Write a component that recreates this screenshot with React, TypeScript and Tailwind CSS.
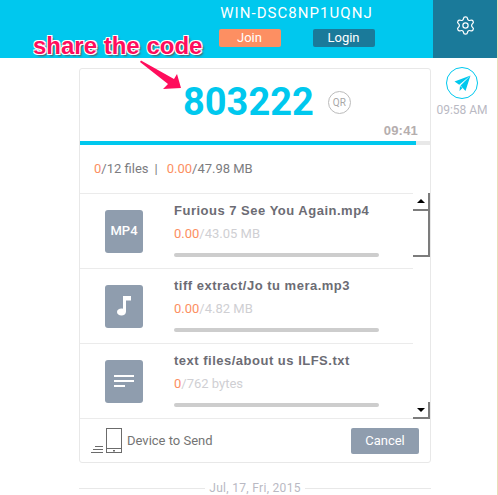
import { Settings } from 'lucide-react'

const files = [
  { name: 'Furious 7 See You Again.mp4', done: '0.00', total: '/43.05 MB', icon: 'mp4' },
  { name: 'tiff extract/Jo tu mera.mp3', done: '0.00', total: '/4.82 MB', icon: 'music' },
  { name: 'text files/about us ILFS.txt', done: '0', total: '/762 bytes', icon: 'text' },
]

function FileIcon({ kind }: { kind: string }) {
  return (
    <div className="flex h-[43px] w-[38px] items-center justify-center rounded-[3px] bg-[#8f9dae] text-[13px] font-medium text-white">
      {kind === 'mp4' && 'MP4'}
      {kind === 'music' && (
        <svg width="16" height="22" viewBox="0 0 16 22" fill="white">
          <path d="M7 1h8v4.500h-5V16.500c0 2.400-2 4-4.500 4S1 19 1 17s2-3.500 4.500-3.500c.6 0 1 .1 1.500.2z" />
        </svg>
      )}
      {kind === 'text' && (
        <svg width="20" height="13" viewBox="0 0 20 13" fill="white">
          <rect x="0" y="0" width="20" height="2" />
          <rect x="0" y="5" width="20" height="2" />
          <rect x="0" y="10" width="11" height="2" />
        </svg>
      )}
    </div>
  )
}

function FileRow({ f, last }: { f: (typeof files)[number]; last?: boolean }) {
  return (
    <div className={`flex border-t border-[#ebebeb] ${last ? 'h-[76px] border-b' : 'h-[75px]'}`}>
      <div className="flex w-[94px] shrink-0 items-center pl-[25px]">
        <FileIcon kind={f.icon} />
      </div>
      <div className="w-[205px] pt-[8px]">
        <div className="whitespace-nowrap font-['Liberation_Sans',sans-serif] text-[13px] leading-[18px] font-bold tracking-[0.5px] text-[#6c6c74]">
          {f.name}
        </div>
        <div className="mt-[5px] text-[13px] leading-[18px] text-[#cfcfd3]">
          <span className="text-[#fc8f62]">{f.done}</span>
          {f.total}
        </div>
        <div className="mt-[10px] h-[4px] rounded-full bg-[#cdcdcd]" />
      </div>
    </div>
  )
}

function ScrollBar() {
  return (
    <div className="flex w-[17px] shrink-0 flex-col">
      <div className="flex h-[18px] items-center justify-center border-r-2 border-b-2 border-[#7c7c7c]">
        <div className="h-0 w-0 border-x-[4px] border-b-[4px] border-x-transparent border-b-black" />
      </div>
      <div className="h-[46px] border-r-2 border-b-2 border-[#7c7c7c]" />
      <div className="flex-1" />
      <div className="flex h-[17px] items-center justify-center border-r-2 border-b-2 border-[#7c7c7c]">
        <div className="h-0 w-0 border-x-[4px] border-t-[4px] border-x-transparent border-t-black" />
      </div>
    </div>
  )
}

export default function App() {
  return (
    <div className="relative h-[495px] w-[498px] overflow-hidden border-r border-[#e9dfb8] bg-white font-['Roboto',sans-serif]">
      {/* header */}
      <header className="flex h-[58px] bg-[#00c8ee]">
        <div className="flex flex-1 flex-col items-center pl-[160px]">
          <div className="mt-[5px] text-[15px] leading-[17px] tracking-[1.05px] text-white">WIN-DSC8NP1UQNJ</div>
          <div className="mt-[7px] flex gap-[32px]">
            <button className="h-[18px] w-[62px] rounded-[2px] bg-[#fd8f62] text-[13px] leading-[18px] text-white">Join</button>
            <button className="h-[18px] w-[62px] rounded-[2px] bg-[#1a7a9a] text-[13px] leading-[18px] text-white">Login</button>
          </div>
        </div>
        <div className="flex w-[64px] items-start justify-center bg-[#1a7a9a] pt-[15px]">
          <Settings size={21} strokeWidth={1.4} className="text-white" />
        </div>
      </header>

      <div className="flex">
        <div className="w-[79px] shrink-0" />
        {/* main card */}
        <div className="mt-[10px] flex h-[395px] w-[352px] flex-col rounded-[3px] border border-[#e8e8e8]">
          <div className="flex h-[72px] items-center pb-[6px] pl-[103px]">
            <span className="text-[38px] leading-none font-bold text-[#00c8ee]">803222</span>
            <span className="ml-[14px] flex h-[23px] w-[23px] items-center justify-center rounded-full border border-[#bbbbbb] text-[10px] text-[#a8a8a8]">QR</span>
            <span className="mt-[57px] ml-auto pr-[12px] font-['Liberation_Sans',sans-serif] text-[13px] leading-[14px] font-bold tracking-[0.2px] text-[#b5aeae]">09:41</span>
          </div>
          <div className="h-[4px] bg-[#e8e8e8]">
            <div className="h-full w-[336px] bg-[#00c8ee]" />
          </div>
          <div className="flex h-[48px] items-center pl-[14px] text-[13px] text-[#7c7c80]">
            <span className="text-[#fc8f62]">0</span>/12 files
            <span className="mx-[6px]">|</span>
            <span className="ml-[3px] text-[#fc8f62]">0.00</span>/47.98 MB
          </div>
          <div className="flex h-[226px] overflow-hidden">
            <div className="w-[333px] shrink-0">
              {files.map((f, i) => (
                <FileRow key={f.name} f={f} last={i === files.length - 1} />
              ))}
            </div>
            <ScrollBar />
          </div>
          <div className="flex flex-1 items-center justify-between pr-[11px] pl-[11px]">
            <div className="flex items-center gap-[3px]">
              <svg width="33" height="26" viewBox="0 0 33 26" fill="none" stroke="#6b6b6b" strokeWidth="1">
                <rect x="15.500" y="0.500" width="15" height="24" />
                <path d="M15.500 20.500h15M4 18.500h8M2 21.500h10M0 24.500h12" />
                <rect x="22" y="22" width="2" height="1.500" fill="#6b6b6b" stroke="none" />
              </svg>
              <span className="text-[13px] text-[#747474]">Device to Send</span>
            </div>
            <button className="h-[26px] w-[68px] rounded-[2px] bg-[#8f9dae] text-[13px] text-white">Cancel</button>
          </div>
        </div>
        {/* side */}
        <div className="flex flex-1 flex-col items-center pt-[9px] pr-[4px]">
          <div className="flex h-[32px] w-[32px] items-center justify-center rounded-full border border-[#00c8ee]">
            <svg width="17" height="17" viewBox="0 0 17 17" fill="#00c8ee">
              <path d="M16.500 0.500L0.500 6.500l4.700 3.300L16.500 0.500zM16.500 0.500L6.500 10.500l5 5.500zM6 11l-.5 5 3-3z" />
            </svg>
          </div>
          <div className="mt-[3px] text-[12px] leading-[16px] whitespace-nowrap text-[#b9b9c3]">09:58 AM</div>
        </div>
      </div>

      {/* date separator */}
      <div className="mt-[18px] ml-[79px] flex w-[352px] items-center gap-[4px]">
        <div className="h-px flex-1 bg-[#e8e8e8]" />
        <span className="text-[12px] leading-[14px] tracking-[0.3px] text-[#b9b9c3]">Jul, 17, Fri, 2015</span>
        <div className="h-px flex-1 bg-[#e8e8e8]" />
      </div>

      {/* annotation over the page */}
      <div className="absolute top-[33px] left-[33px] font-['Liberation_Sans',sans-serif] text-[24px] leading-[26px] font-bold whitespace-nowrap text-[#ff0d5c] [text-shadow:-1px_-1px_0_#fff,1px_-1px_0_#fff,-1px_1px_0_#fff,1px_1px_0_#fff,2px_2px_2px_#555]">
        share the code
      </div>
      <svg className="absolute top-[60px] left-[138px]" width="46" height="32" viewBox="0 0 46 32" fill="#ff0d5c">
        <path d="M2 2L3 0.500L36 19L39 14L43 28L25 29L30 24z" />
      </svg>
    </div>
  )
}
